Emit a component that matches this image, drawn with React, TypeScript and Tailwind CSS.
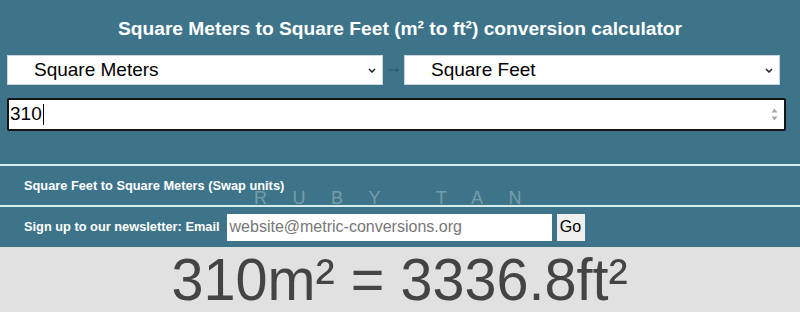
import React from "react";

function Spinner() {
  return (
    <div className="flex flex-col items-center justify-center gap-[3px] pr-[6px]">
      <svg width="7" height="5" viewBox="0 0 7 5"><path d="M3.5 0.5 L6.5 4.5 L0.5 4.5 Z" fill="#a8a8a8" /></svg>
      <svg width="7" height="5" viewBox="0 0 7 5"><path d="M0.5 0.5 L6.5 0.5 L3.5 4.5 Z" fill="#a8a8a8" /></svg>
    </div>
  );
}

function Chevron() {
  return (
    <svg width="8" height="5" viewBox="0 0 8 5" className="mr-[6px]">
      <path d="M1 1 L4 4 L7 1" stroke="#222" strokeWidth="1.5" fill="none" />
    </svg>
  );
}

function Select({ label }: { label: string }) {
  return (
    <div className="flex h-[30px] w-[376px] items-center justify-between border border-[#c9d6dc] bg-white pl-[26px]">
      <span className="text-[19px] text-black">{label}</span>
      <Chevron />
    </div>
  );
}

export default function App() {
  return (
    <div
      className="h-[312px] w-[800px] overflow-hidden"
      style={{ fontFamily: '"Liberation Sans", Arial, sans-serif' }}
    >
      <div className="relative flex h-[247px] flex-col bg-[#3e7489]">
        <h1 className="pt-[17px] text-center text-[19.2px] font-bold leading-[24px] text-white">
          Square Meters to Square Feet (m² to ft²) conversion calculator
        </h1>
        <div className="mt-[14px] flex items-center pl-[7px]">
          <Select label="Square Meters" />
          <div className="flex w-[21px] items-center justify-center">
            <svg width="12" height="6" viewBox="0 0 12 6">
              <path d="M0.5 3 H10.5 M8 1 L10.5 3 L8 5" stroke="#2c5566" strokeWidth="1" fill="none" />
            </svg>
          </div>
          <Select label="Square Feet" />
        </div>
        <div className="ml-[7px] mt-[13px] flex h-[33px] w-[779px] items-center justify-between rounded-[2px] border-2 border-[#151515] bg-white">
          <div className="flex items-center pl-[1px] text-[19px] text-black">
            <span>310</span>
            <span className="ml-[1px] h-[21px] w-[1px] bg-black" />
          </div>
          <Spinner />
        </div>
        <div className="mt-[33px] h-[2px] bg-[#d6eef0]" />
        <div className="flex h-[39px] items-center pl-[24px] text-[12.8px] font-bold text-white">
          Square Feet to Square Meters (Swap units)
        </div>
        <div className="h-[2px] bg-[#d6eef0]" />
        <div className="flex flex-1 items-center pl-[24px]">
          <span className="text-[12.8px] font-bold text-white">Sign up to our newsletter: Email</span>
          <div className="ml-[7px] flex h-[27px] w-[325px] items-center bg-white pl-[3px] text-[16px] text-[#777]">
            website@metric-conversions.org
          </div>
          <div className="ml-[5px] flex h-[27px] w-[28px] items-center justify-center bg-[#efefef] text-[16px] text-black">
            Go
          </div>
        </div>
        <div className="pointer-events-none absolute left-[254px] top-[185px] text-[18px] tracking-[25.5px] text-white/30 whitespace-pre">
          RUBY TAN
        </div>
      </div>
      <div className="flex h-[65px] items-start justify-center bg-[#e1e1e1]">
        <span className="mt-[-1px] inline-block origin-center scale-x-[0.96] text-[60px] leading-[68px] text-[#444]">
          310m² = 3336.8ft²
        </span>
      </div>
    </div>
  );
}
